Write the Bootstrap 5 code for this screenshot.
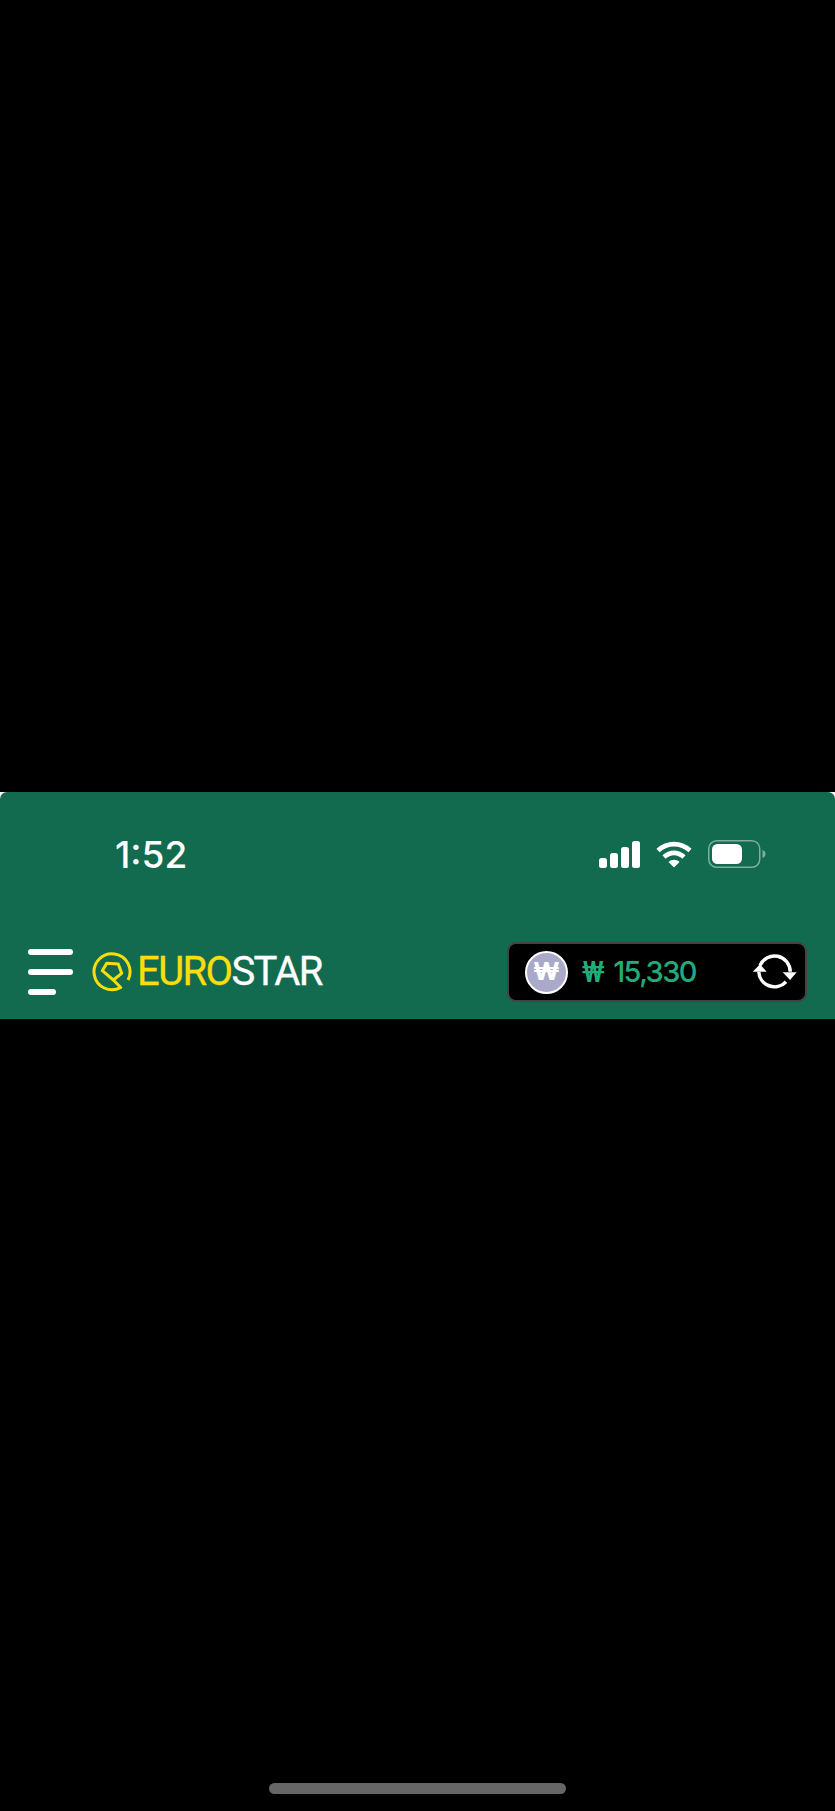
<!DOCTYPE html>
<html lang="en">
<head>
  <meta charset="UTF-8">
  <meta name="viewport" content="width=device-width, initial-scale=1.0">
  <link href="https://cdn.jsdelivr.net/npm/bootstrap@5.3.0/dist/css/bootstrap.min.css" rel="stylesheet">
  <title>Eurostar</title>
  <style>
    body { background: #000; font-family: Inter, "Liberation Sans", sans-serif; }
    .top-shell { margin-top: 792px; background: linear-gradient(#fff 0, #fff 8px, #126b4f 8px); }
    .top-green { background: #126b4f; height: 227px; border-radius: 7px 7px 0 0; }
    .status-row { height: 125px; padding: 41px 69px 0 115px; }
    .status-icons { padding-top: 7px; }
    .clock { font-size: 37px; line-height: 44px; font-weight: 500; width: 72px; }
    .menu-btn { width: 45px; gap: 14px; margin-left: 28px; }
    .menu-btn span { height: 6px; border-radius: 3px; background: #fff; }
    .menu-btn span:last-child { width: 28px; }
    .brand-mark { margin-left: 19px; }
    .brand-text { font-family: Roboto, sans-serif; font-size: 40px; line-height: 40px; margin-left: 5px; letter-spacing: -1.6px; -webkit-text-stroke: .3px; }
    .brand-euro { color: #fbdd0c; }
    .wallet { width: 300px; height: 60px; margin: 0 28px 0 auto; background: #000; border: 2px solid #444; border-radius: 9px; padding: 0 7px 0 16px; }
    .won-coin { width: 43px; height: 43px; background: #a9a9c9; border: 2px solid #fff; font-size: 25px; font-weight: 800; }
    .wallet-sum { color: #22ac7a; font-size: 29px; font-weight: 500; margin-left: 14px; letter-spacing: -1.6px; }
    .wallet-won { font-family: Roboto, sans-serif; margin-right: 4px; }
    .home-bar { width: 297px; height: 11px; background: #666; border-radius: 6px; margin-bottom: 17px; }
  </style>
</head>
<body class="d-flex flex-column vh-100 m-0">
  <div class="top-shell">
    <header class="top-green text-white d-flex flex-column">
      <div class="status-row d-flex align-items-start justify-content-between">
        <div class="clock">1:52</div>
        <div class="status-icons d-flex align-items-center gap-3">
          <svg width="42" height="27" viewBox="0 0 42 27" fill="#fff">
            <rect x="1" y="17" width="8" height="10" rx="2.5"/>
            <rect x="12" y="12" width="8" height="15" rx="2.5"/>
            <rect x="23" y="6" width="8" height="21" rx="2.5"/>
            <rect x="34" y="0" width="8" height="27" rx="2.5"/>
          </svg>
          <svg width="36" height="27" viewBox="0 0 36 27" fill="none" stroke="#fff" stroke-width="4.6">
            <path d="M2 9.5C11.500 1 24.500 1 34 9.500"/>
            <path d="M8 16C14 10.500 22 10.500 28 16"/>
            <path d="M18 26.500L12.500 21C15.500 18 20.500 18 23.500 21Z" fill="#fff" stroke="none"/>
          </svg>
          <svg width="58" height="28" viewBox="0 0 58 28">
            <rect x=".75" y=".75" width="51" height="26.500" rx="8" fill="none" stroke="#7fae9e" stroke-width="1.500"/>
            <rect x="4" y="4" width="30" height="20" rx="5.500" fill="#fff"/>
            <path d="M54.500 10C57 11 57.500 12.500 57.500 14C57.500 15.500 57 17 54.500 18Z" fill="#7fae9e"/>
          </svg>
        </div>
      </div>
      <nav class="d-flex align-items-center flex-grow-1 pt-2">
        <div class="menu-btn d-flex flex-column">
          <span></span><span></span><span></span>
        </div>
        <svg class="brand-mark" width="40" height="40" viewBox="0 0 40 40" fill="none" stroke="#fbdd0c" stroke-width="3" stroke-linejoin="round">
          <path d="M36 28A18 18 0 1 0 28.700 35.500L21.300 28L10.300 18.700L14.700 11.300L26.300 12L29.700 21.300L21.300 28"/>
        </svg>
        <div class="brand-text"><span class="brand-euro">EURO</span>STAR</div>
        <div class="wallet d-flex align-items-center">
          <div class="won-coin rounded-circle d-flex align-items-center justify-content-center">₩</div>
          <div class="wallet-sum flex-grow-1"><span class="wallet-won">₩</span> 15,330</div>
          <svg width="46" height="36" viewBox="0 0 46 36" fill="none" stroke="#fff" stroke-width="3.500">
            <path d="M8.100 11.400A15.700 15.700 0 0 1 38.200 17.700"/>
            <path d="M6.800 17.700A15.700 15.700 0 0 0 34 27.700"/>
            <path d="M8 10.300L.7 17.700H14.700Z" fill="#fff" stroke="none"/>
            <path d="M30.700 18.300H44.700L38 26Z" fill="#fff" stroke="none"/>
          </svg>
        </div>
      </nav>
    </header>
  </div>
  <div class="home-bar mt-auto mx-auto"></div>
  <script src="https://cdn.jsdelivr.net/npm/bootstrap@5.3.0/dist/js/bootstrap.bundle.min.js"></script>
</body>
</html>
